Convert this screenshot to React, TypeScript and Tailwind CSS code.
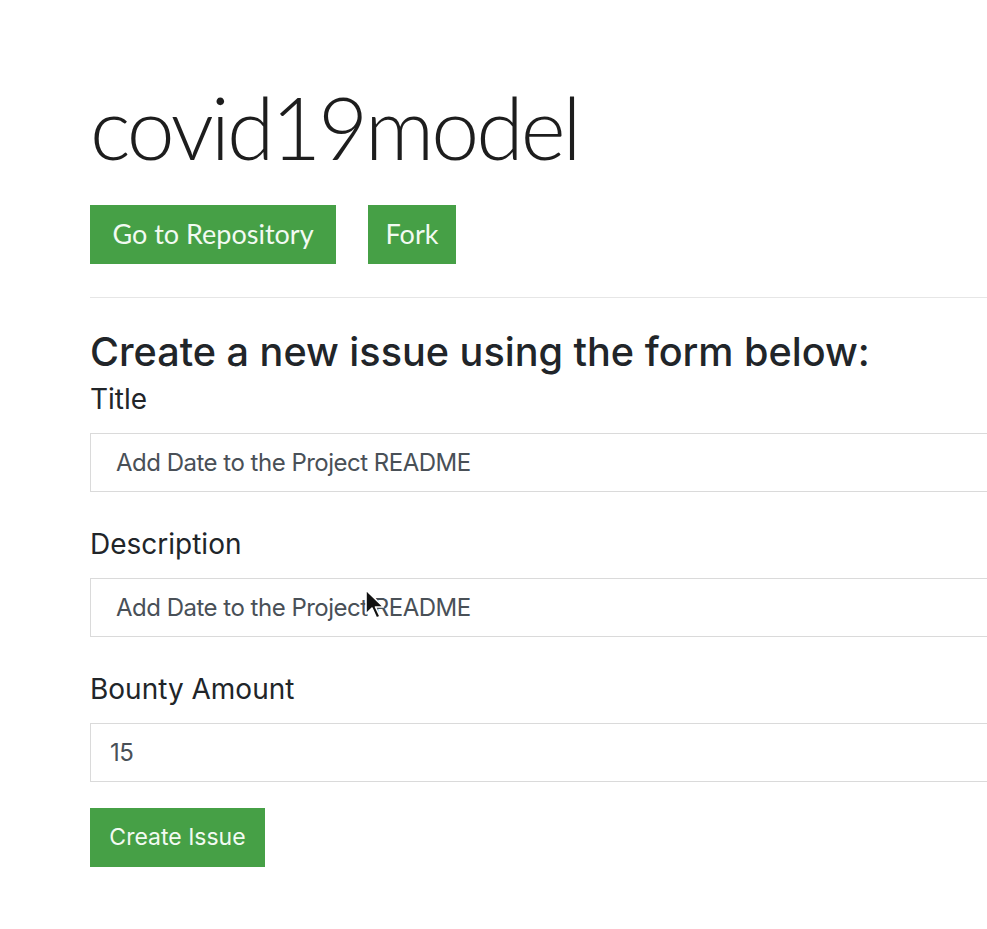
import React from "react";

const Cursor = () => (
  <svg
    className="absolute left-[364px] top-[588px]"
    width="22"
    height="34"
    viewBox="0 0 22 34"
  >
    <path
      d="M2 2 L2 26 L8 20 L12.5 30 L16 28.5 L11.5 19 L19.5 19 Z"
      fill="#111"
      stroke="#fff"
      strokeWidth="1.6"
      strokeLinejoin="round"
    />
  </svg>
);

const Field = ({
  label,
  value,
  first,
  pad = "pl-[25px]",
}: {
  label: string;
  value: string;
  first?: boolean;
  pad?: string;
}) => (
  <div className={first ? "mt-[6px]" : "mt-[35px]"}>
    <label className="block text-[28px] leading-[34px] text-[#212529]">{label}</label>
    <input
      readOnly
      value={value}
      className={`mt-[17px] block h-[59px] w-[1000px] border border-[#dadada] bg-white ${pad} text-[24px] tracking-[-0.5px] text-[#495057] outline-none`}
    />
  </div>
);

export default function App() {
  return (
    <div className="relative h-[929px] w-full overflow-hidden bg-white font-['Inter',sans-serif]">
      <div className="w-[1100px] pl-[90px]">
        <h1 className="pt-[83px] font-['Lato',sans-serif] text-[86px] font-light leading-[88px] tracking-[-3px] text-[#1d1d1d]">
          covid19model
        </h1>

        <div className="mt-[34px] flex gap-[32px]">
          <button className="h-[59px] w-[246px] bg-[#46a046] font-['Lato',sans-serif] text-[27px] text-[#f2faf2]">
            Go to Repository
          </button>
          <button className="h-[59px] w-[88px] bg-[#46a046] font-['Lato',sans-serif] text-[27px] text-[#f2faf2]">
            Fork
          </button>
        </div>

        <hr className="mt-[33px] border-t border-[#e6e6e6]" />

        <h3 className="mt-[30px] text-[39.6px] font-medium leading-[48px] text-[#212529]">
          Create a new issue using the form below:
        </h3>

        <form onSubmit={(e) => e.preventDefault()}>
          <Field first label="Title" value="Add Date to the Project README" />
          <Field label="Description" value="Add Date to the Project README" />
          <Field label="Bounty Amount" value="15" pad="pl-[19px]" />
          <button
            type="submit"
            className="mt-[26px] h-[59px] w-[175px] bg-[#46a046] text-[23px] text-[#f2faf2]"
          >
            Create Issue
          </button>
        </form>
      </div>
      <Cursor />
    </div>
  );
}
